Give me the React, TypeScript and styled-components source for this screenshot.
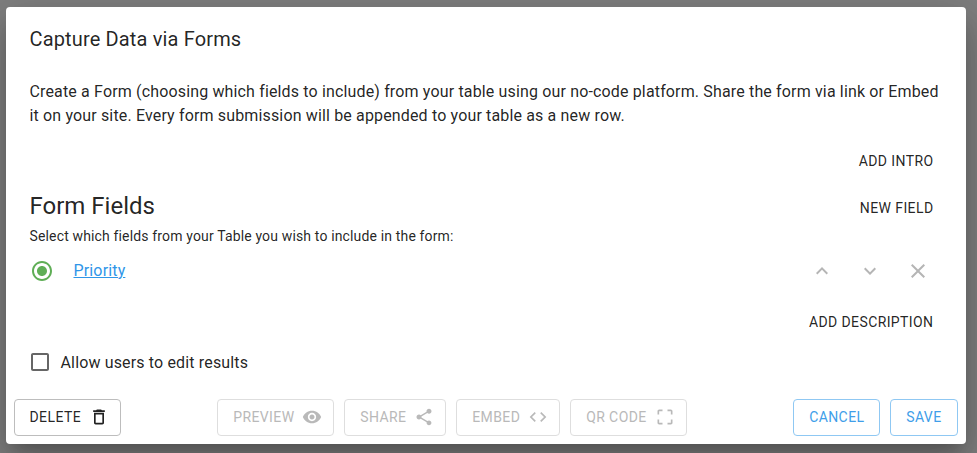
import React from "react";
import styled, { createGlobalStyle } from "styled-components";

const GlobalStyle = createGlobalStyle`
  *, *::before, *::after { box-sizing: border-box; }
  body {
    margin: 0;
    overflow: hidden;
    background: #7f7f7f;
    font-family: Roboto, "Liberation Sans", sans-serif;
    font-size: 16px;
    line-height: 24px;
    letter-spacing: 0.15px;
    color: rgba(0, 0, 0, 0.87);
    -webkit-font-smoothing: antialiased;
  }
`;

const Backdrop = styled.div`
  height: 453px;
  padding: 7px 0 0 6px;
`;

const Dialog = styled.section`
  display: flex;
  flex-direction: column;
  width: 960px;
  height: 437px;
  background: #fff;
  border-radius: 4px;
  box-shadow:
    0 11px 15px -7px rgba(0, 0, 0, 0.2),
    0 24px 38px 3px rgba(0, 0, 0, 0.14),
    0 9px 46px 8px rgba(0, 0, 0, 0.12);
`;

const Title = styled.h2`
  margin: 0;
  padding: 16px 23.5px;
  font-size: 20px;
  font-weight: 400;
  line-height: 32px;
  letter-spacing: 0.15px;
`;

const Content = styled.div`
  flex: 1;
  padding: 9px 24.5px 0 23.5px;
`;

const Intro = styled.p`
  margin: 0 0 15px;
  white-space: nowrap;
  letter-spacing: 0.15px;
`;

const Row = styled.div<{ $gap?: number }>`
  display: flex;
  justify-content: space-between;
  align-items: flex-start;
  margin-top: ${(p) => p.$gap ?? 0}px;
`;

const EndRow = styled(Row)`
  justify-content: flex-end;
`;

const Heading = styled.h3`
  margin: 0;
  font-size: 24px;
  font-weight: 400;
  line-height: 32px;
  letter-spacing: 0;
`;

const Hint = styled.p`
  margin: 0;
  font-size: 14px;
  line-height: 20px;
  letter-spacing: 0.15px;
`;

const FieldRow = styled.div`
  display: flex;
  align-items: center;
  height: 48px;
  margin: 1px -0.5px 0 0.5px;
`;

const FieldLink = styled.a`
  flex: 1;
  margin-left: 19.5px;
  color: #2f96e8;
  text-decoration: underline;
`;

const IconButton = styled.button`
  display: flex;
  padding: 12px;
  border: 0;
  background: none;
  color: #b5b5b5;
`;

const TextButton = styled.button`
  height: 36px;
  padding: 6px 8px;
  border: 0;
  background: none;
  color: inherit;
  font: 400 14px/24px Roboto, "Liberation Sans", sans-serif;
  letter-spacing: 0.4px;
  text-transform: uppercase;
`;

const CheckLabel = styled.label`
  display: flex;
  align-items: center;
  gap: 8.5px;
  height: 42px;
  margin: 1px 0 0 -1.5px;
`;

const CheckText = styled.span`
  padding-top: 2px;
`;

const Actions = styled.footer`
  display: flex;
  justify-content: space-between;
  padding: 0 8px 8px;
`;

const Group = styled.div<{ $shift?: number }>`
  display: flex;
  gap: 10px;
  margin-left: ${(p) => p.$shift ?? 0}px;
`;

type Tone = "default" | "disabled" | "primary";
const tones: Record<Tone, { text: string; border: string; inset: number }> = {
  default: { text: "rgba(0,0,0,0.87)", border: "#bdbdbd", inset: 14.5 },
  disabled: { text: "#b9b9b9", border: "#dedede", inset: 15.2 },
  primary: { text: "#409ee9", border: "#8fc8f3", inset: 15.2 },
};

const OutlinedButton = styled.button<{ $tone: Tone; $width: number }>`
  display: flex;
  align-items: center;
  justify-content: space-between;
  width: ${(p) => p.$width}px;
  height: 37px;
  padding: 4px 14px 6px ${(p) => tones[p.$tone].inset}px;
  border: 1px solid ${(p) => tones[p.$tone].border};
  border-radius: 4px;
  background: none;
  color: ${(p) => tones[p.$tone].text};
  font: 400 14px/24px Roboto, "Liberation Sans", sans-serif;
  letter-spacing: 0.4px;
  white-space: nowrap;

  svg {
    margin: 1px -3px 0 0;
  }
`;

const Svg = styled.svg`
  display: block;
  flex: none;
  fill: currentColor;
`;

const RadioSvg = styled(Svg)`
  color: #5fae56;
`;

const CheckSvg = styled(Svg)`
  color: #666;
`;

const paths = {
  radio:
    "M12 7c-2.76 0-5 2.24-5 5s2.24 5 5 5 5-2.24 5-5-2.24-5-5-5zm0-5C6.48 2 2 6.48 2 12s4.48 10 10 10 10-4.48 10-10S17.52 2 12 2zm0 18c-4.42 0-8-3.58-8-8s3.58-8 8-8 8 3.58 8 8-3.58 8-8 8z",
  up: "M12 8l-6 6 1.41 1.41L12 10.83l4.59 4.58L18 14z",
  down: "M16.59 8.59L12 13.17 7.41 8.59 6 10l6 6 6-6z",
  close:
    "M19 6.41L17.59 5 12 10.59 6.41 5 5 6.41 10.59 12 5 17.59 6.41 19 12 13.41 17.59 19 19 17.59 13.41 12z",
  checkbox:
    "M19 5v14H5V5h14m0-2H5c-1.1 0-2 .9-2 2v14c0 1.1.9 2 2 2h14c1.1 0 2-.9 2-2V5c0-1.1-.9-2-2-2z",
  trash:
    "M6 19c0 1.1.9 2 2 2h8c1.1 0 2-.9 2-2V7H6v12zM8 9h8v10H8V9zm7.5-5l-1-1h-5l-1 1H5v2h14V4z",
  eye: "M12 4.5C7 4.5 2.73 7.61 1 12c1.73 4.39 6 7.5 11 7.5s9.27-3.11 11-7.5c-1.73-4.39-6-7.5-11-7.5zM12 17c-2.76 0-5-2.24-5-5s2.24-5 5-5 5 2.24 5 5-2.24 5-5 5zm0-8c-1.66 0-3 1.34-3 3s1.34 3 3 3 3-1.34 3-3-1.34-3-3-3z",
  share:
    "M18 16.08c-.76 0-1.44.3-1.96.77L8.91 12.7c.05-.23.09-.46.09-.7s-.04-.47-.09-.7l7.05-4.11c.54.5 1.25.81 2.04.81 1.66 0 3-1.34 3-3s-1.34-3-3-3-3 1.34-3 3c0 .24.04.47.09.7L8.04 9.81C7.5 9.31 6.79 9 6 9c-1.66 0-3 1.34-3 3s1.34 3 3 3c.79 0 1.5-.31 2.04-.81l7.12 4.16c-.05.21-.08.43-.08.65 0 1.61 1.31 2.92 2.92 2.92s2.92-1.31 2.92-2.92-1.31-2.92-2.92-2.92z",
  code: "M9.4 16.6L4.8 12l4.6-4.6L8 6l-6 6 6 6 1.4-1.4zm5.2 0l4.6-4.6-4.6-4.6L16 6l6 6-6 6-1.4-1.4z",
  frame:
    "M3 5v4h2V5h4V3H5c-1.1 0-2 .9-2 2zm2 10H3v4c0 1.1.9 2 2 2h4v-2H5v-4zm14 4h-4v2h4c1.1 0 2-.9 2-2v-4h-2v4zm0-16h-4v2h4v4h2V5c0-1.1-.9-2-2-2z",
};

type IconProps = { name: keyof typeof paths; size?: number; as?: typeof Svg };

function Icon({ name, size = 24, as: Component = Svg }: IconProps) {
  return (
    <Component width={size} height={size} viewBox="0 0 24 24" aria-hidden="true">
      <path d={paths[name]} />
    </Component>
  );
}

const tools: { label: string; icon: keyof typeof paths; width: number }[] = [
  { label: "PREVIEW", icon: "eye", width: 117 },
  { label: "SHARE", icon: "share", width: 102 },
  { label: "EMBED", icon: "code", width: 104 },
  { label: "QR CODE", icon: "frame", width: 117 },
];

export default function App() {
  return (
    <Backdrop>
      <GlobalStyle />
      <Dialog role="dialog">
        <Title>Capture Data via Forms</Title>
        <Content>
          <Intro>
            Create a Form (choosing which fields to include) from your table using our no-code
            platform. Share the form via link or Embed
            <br />
            it on your site. Every form submission will be appended to your table as a new row.
          </Intro>
          <EndRow>
            <TextButton>Add intro</TextButton>
          </EndRow>
          <Row $gap={11}>
            <Heading>Form Fields</Heading>
            <TextButton>New field</TextButton>
          </Row>
          <Hint>Select which fields from your Table you wish to include in the form:</Hint>
          <FieldRow>
            <Icon name="radio" as={RadioSvg} />
            <FieldLink>Priority</FieldLink>
            <IconButton aria-label="Move up">
              <Icon name="up" />
            </IconButton>
            <IconButton aria-label="Move down">
              <Icon name="down" />
            </IconButton>
            <IconButton aria-label="Remove">
              <Icon name="close" />
            </IconButton>
          </FieldRow>
          <EndRow $gap={9}>
            <TextButton>Add description</TextButton>
          </EndRow>
          <CheckLabel>
            <Icon name="checkbox" as={CheckSvg} />
            <CheckText>Allow users to edit results</CheckText>
          </CheckLabel>
        </Content>
        <Actions>
          <OutlinedButton $tone="default" $width={107}>
            DELETE
            <Icon name="trash" size={20} />
          </OutlinedButton>
          <Group $shift={-10}>
            {tools.map((t) => (
              <OutlinedButton key={t.label} $tone="disabled" $width={t.width}>
                {t.label}
                <Icon name={t.icon} size={20} />
              </OutlinedButton>
            ))}
          </Group>
          <Group>
            <OutlinedButton $tone="primary" $width={87}>
              CANCEL
            </OutlinedButton>
            <OutlinedButton $tone="primary" $width={68}>
              SAVE
            </OutlinedButton>
          </Group>
        </Actions>
      </Dialog>
    </Backdrop>
  );
}
